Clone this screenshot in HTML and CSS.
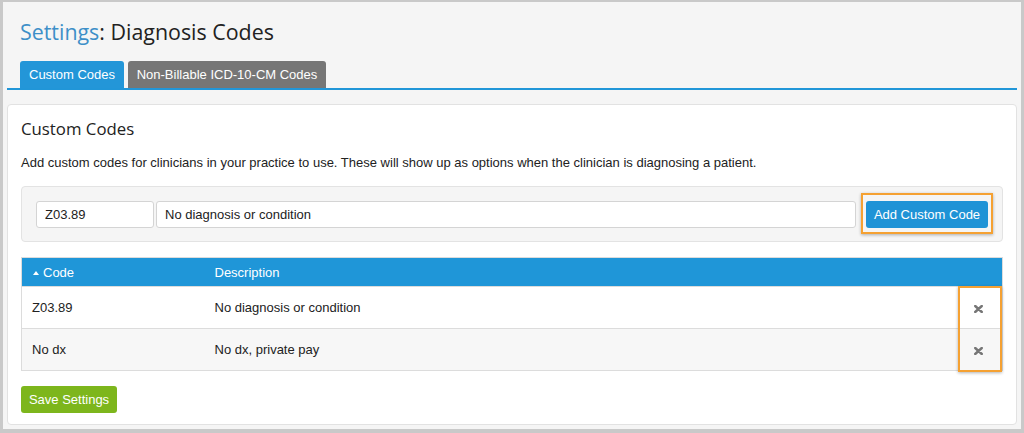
FILE: index.html
```html
<!DOCTYPE html>
<html>
<head>
<meta charset="utf-8">
<link rel="stylesheet" href="styles.css">
</head>
<body>
<div class="frame">
  <h1 class="title"><span class="title-blue">Settings</span>: Diagnosis Codes</h1>
  <div class="tabs">
    <div class="tab tab-active">Custom Codes</div>
    <div class="tab tab-gray">Non-Billable ICD-10-CM Codes</div>
  </div>
  <div class="panel">
    <h2 class="panel-title">Custom Codes</h2>
    <p class="desc">Add custom codes for clinicians in your practice to use. These will show up as options when the clinician is diagnosing a patient.</p>
    <div class="well">
      <input class="inp inp-code" type="text" value="Z03.89">
      <input class="inp inp-desc" type="text" value="No diagnosis or condition">
      <div class="btn-wrap">
        <button class="btn btn-blue">Add Custom Code</button>
        <span class="hl hl-btn"></span>
      </div>
    </div>
    <div class="table-wrap">
      <table class="codes">
        <thead>
          <tr><th class="c-code"><span class="tri"></span>Code</th><th class="c-desc">Description</th><th class="c-act"></th></tr>
        </thead>
        <tbody>
          <tr><td class="c-code">Z03.89</td><td class="c-desc">No diagnosis or condition</td><td class="c-act"><svg class="x" width="9" height="8" viewBox="0 0 9 8"><path d="M1.2 1 L7.8 7 M7.8 1 L1.2 7" stroke="#767676" stroke-width="2.4" stroke-linecap="round"/></svg></td></tr>
          <tr class="alt"><td class="c-code">No dx</td><td class="c-desc">No dx, private pay</td><td class="c-act"><svg class="x" width="9" height="8" viewBox="0 0 9 8"><path d="M1.2 1 L7.8 7 M7.8 1 L1.2 7" stroke="#767676" stroke-width="2.4" stroke-linecap="round"/></svg></td></tr>
        </tbody>
      </table>
      <span class="hl hl-x"></span>
    </div>
    <button class="btn btn-green">Save Settings</button>
  </div>
</div>
</body>
</html>
```
FILE: styles.css
```css
html, body { margin: 0; padding: 0; }
body { font-family: "Liberation Sans", Arial, sans-serif; font-size: 13px; color: #222; }
.frame {
  height: 433px;
  box-sizing: border-box;
  border-style: solid;
  border-color: #c9c9c9;
  border-width: 2px 3px 4px 3px;
  background: #f5f5f5;
  padding: 15px 4px 4px 4px;
  display: flex;
  flex-direction: column;
}
.title {
  margin: 0 0 14px 13px;
  font-family: "Open Sans", sans-serif;
  font-weight: 400;
  font-size: 21.4px;
  line-height: 30px;
  color: #222;
}
.title-blue { color: #3d8fc8; }
.tabs {
  display: flex;
  gap: 4px;
  padding-left: 13px;
  border-bottom: 2px solid #2196d8;
}
.tab {
  height: 27px;
  line-height: 27px;
  color: #fff;
  border-radius: 3px 3px 0 0;
  font-size: 13px;
  text-align: center;
  white-space: nowrap;
}
.tab-active { background: #2396d8; width: 104px; }
.tab-gray { background: #767676; width: 198px; }
.panel {
  margin-top: 14px;
  flex: 1;
  background: #fff;
  border: 1px solid #e2e2e2;
  border-radius: 4px;
  padding: 12px 13px 0 13px;
}
.panel-title {
  margin: 0;
  font-family: "Open Sans", sans-serif;
  font-weight: 400;
  font-size: 16.8px;
  line-height: 24px;
  color: #222;
}
.desc {
  margin: 13px 0 0 0;
  line-height: 18px;
}
.well {
  margin-top: 14px;
  background: #f5f5f5;
  border: 1px solid #e3e3e3;
  border-radius: 4px;
  padding: 14px 14px 13px 14px;
  display: flex;
  align-items: center;
}
.inp {
  box-sizing: border-box;
  height: 27px;
  border: 1px solid #d4d4d4;
  border-radius: 3px;
  background: #fff;
  padding: 0 8px;
  font-family: "Liberation Sans", Arial, sans-serif;
  font-size: 13px;
  color: #222;
  outline: none;
}
.inp-code { width: 118px; margin-right: 2px; }
.inp-desc { width: 700px; }
.btn-wrap { position: relative; margin-left: 10px; display: flex; }
.btn {
  box-sizing: border-box;
  height: 27px;
  border: 0;
  border-radius: 3px;
  color: #fff;
  font-family: "Liberation Sans", Arial, sans-serif;
  font-size: 13px;
  padding: 0;
  white-space: nowrap;
  text-align: center;
}
.btn-blue { width: 122px; background: #1f93d6; }
.btn-green { width: 96px; background: #7db61c; margin-top: 15px; display: block; }
.hl {
  position: absolute;
  border: 2px solid #f5a132;
  box-shadow: 0 1px 3px rgba(0,0,0,0.3);
  pointer-events: none;
}
.hl-btn { top: -8px; bottom: -6px; left: -5px; right: -5px; }
.table-wrap { position: relative; margin-top: 15px; }
.codes {
  width: 100%;
  border-collapse: collapse;
  border: 1px solid #dcdcdc;
}
.codes th {
  background: #1f96d8;
  color: #fff;
  font-weight: 400;
  text-align: left;
  height: 29px;
  padding: 0 10px;
  box-sizing: border-box;
}
.codes td {
  height: 42px;
  padding: 0 10px;
  border-top: 1px solid #dcdcdc;
  box-sizing: border-box;
}
.codes .alt td { background: #f7f7f7; }
.codes th.c-code { padding-left: 11px; }
.c-code { width: 183px; box-sizing: border-box; }
.c-act { width: 44px; text-align: right; }
.codes td.c-act { padding-right: 19px; }
.x { display: inline-block; vertical-align: middle; }
.tri {
  display: inline-block;
  width: 0; height: 0;
  border-left: 3px solid transparent;
  border-right: 3px solid transparent;
  border-bottom: 4px solid #fff;
  vertical-align: 2px;
  margin-right: 4px;
}
.hl-x { top: 29px; bottom: -1px; right: 1px; width: 40px; }
```
